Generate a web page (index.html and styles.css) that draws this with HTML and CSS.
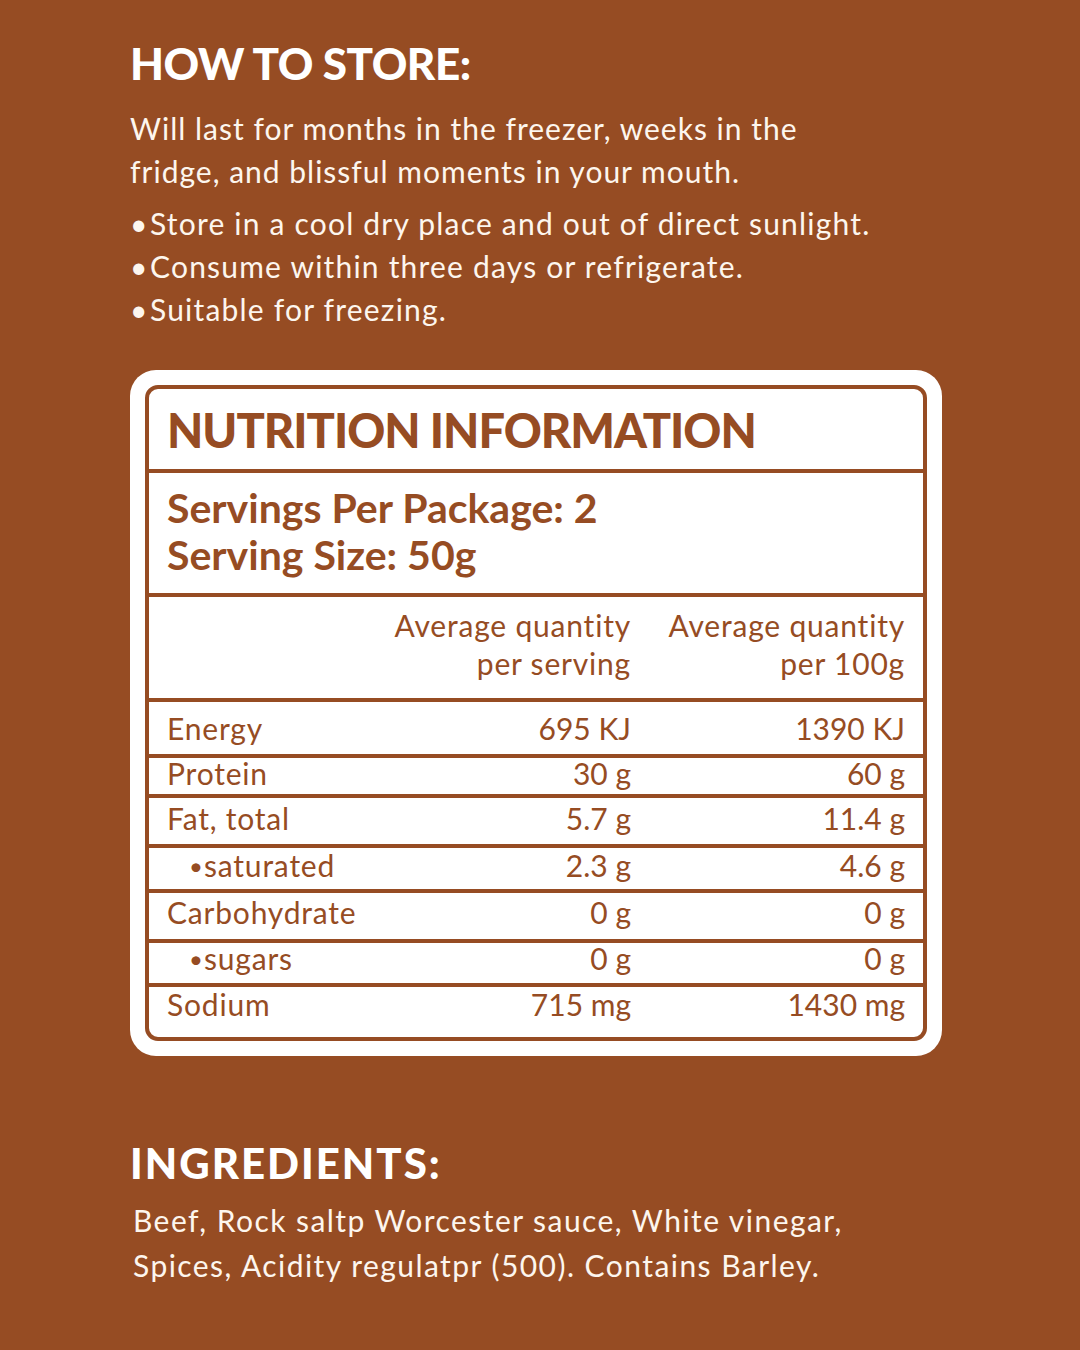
FILE: index.html
```html
<!DOCTYPE html>
<html lang="en">
<head>
<meta charset="utf-8">
<title>Nutrition</title>
<link rel="stylesheet" href="styles.css">
</head>
<body>
<main class="page">
  <section class="store">
    <h1 class="section-title">HOW TO STORE:</h1>
    <p class="lead">Will last for months in the freezer, weeks in the<br>fridge, and blissful moments in your mouth.</p>
    <ul class="bullets">
      <li>Store in a cool dry place and out of direct sunlight.</li>
      <li>Consume within three days or refrigerate.</li>
      <li>Suitable for freezing.</li>
    </ul>
  </section>

  <section class="panel">
    <div class="panel-inner">
      <h2 class="panel-title">NUTRITION INFORMATION</h2>
      <div class="servings">Servings Per Package: 2<br>Serving Size: 50g</div>
      <div class="row head">
        <span></span>
        <span class="num">Average quantity<br>per serving</span>
        <span class="num">Average quantity<br>per 100g</span>
      </div>
      <div class="row r-energy"><span class="label">Energy</span><span class="num">695 KJ</span><span class="num">1390 KJ</span></div>
      <div class="row r-protein"><span class="label">Protein</span><span class="num">30 g</span><span class="num">60 g</span></div>
      <div class="row r-fat"><span class="label">Fat, total</span><span class="num">5.7 g</span><span class="num">11.4 g</span></div>
      <div class="row r-sat"><span class="label sub">saturated</span><span class="num">2.3 g</span><span class="num">4.6 g</span></div>
      <div class="row r-carb"><span class="label">Carbohydrate</span><span class="num">0 g</span><span class="num">0 g</span></div>
      <div class="row r-sug"><span class="label sub">sugars</span><span class="num">0 g</span><span class="num">0 g</span></div>
      <div class="row r-sod"><span class="label">Sodium</span><span class="num">715 mg</span><span class="num">1430 mg</span></div>
    </div>
  </section>

  <section class="ingredients">
    <h2 class="section-title ing-title">INGREDIENTS:</h2>
    <p class="ing-text">Beef, Rock saltp Worcester sauce, White vinegar,<br>Spices, Acidity regulatpr (500). Contains Barley.</p>
  </section>
</main>
</body>
</html>
```

FILE: styles.css
```css
* { box-sizing: border-box; }

html, body {
  margin: 0;
  padding: 0;
}

body {
  background: #964c23;
  font-family: Lato, "Noto Sans", sans-serif;
  color: #fdf6ee;
  width: 1080px;
  height: 1350px;
  overflow: hidden;
}

.page {
  padding: 41px 0 0 130px;
}

.section-title {
  margin: 0;
  font-size: 44px;
  line-height: 44px;
  font-weight: 900;
  color: #ffffff;
  letter-spacing: -0.5px;
}

.lead {
  margin: 22px 0 0;
  font-size: 30px;
  line-height: 43px;
  font-weight: 400;
  letter-spacing: 1px;
}

.bullets {
  list-style: none;
  margin: 9px 0 0;
  padding: 0;
  font-size: 30px;
  line-height: 43px;
  letter-spacing: 1.2px;
}

.bullets li {
  display: flex;
}

.bullets li::before {
  content: "\2022";
  width: 20px;
  flex: none;
  letter-spacing: 0;
}

.panel {
  margin-top: 39px;
  width: 812px;
  background: #ffffff;
  border-radius: 26px;
  padding: 15px;
}

.panel-inner {
  border: 4px solid #964c23;
  border-radius: 13px;
  color: #964c23;
}

.panel-title {
  margin: 0;
  padding: 18px 18px 15px;
  font-size: 47px;
  line-height: 47px;
  font-weight: 900;
  letter-spacing: -1px;
  border-bottom: 4px solid #964c23;
}

.servings {
  padding: 11px 18px 15px;
  font-size: 41px;
  line-height: 47px;
  font-weight: 700;
  border-bottom: 4px solid #964c23;
}

.row {
  display: grid;
  grid-template-columns: 213px 251px 274px;
  padding: 0 17px 0 18px;
  font-size: 30px;
  line-height: 30px;
  border-bottom: 4px solid #964c23;
}

.row:last-child {
  border-bottom: none;
}

.row .label {
  letter-spacing: 0.8px;
}

.row .num {
  text-align: right;
  white-space: nowrap;
}

.row .sub {
  padding-left: 22px;
}

.row .sub::before {
  content: "\2022";
  display: inline-block;
  width: 15px;
  font-size: 24px;
  vertical-align: 2px;
}

.row.head {
  line-height: 38px;
  padding-top: 9px;
  padding-bottom: 16px;
}

.row.head .num {
  letter-spacing: 0.8px;
}

.r-energy { padding-top: 11px; padding-bottom: 11px; }
.r-protein { padding-top: 0; padding-bottom: 6px; }
.r-fat { padding-top: 5px; padding-bottom: 11px; }
.r-sat { padding-top: 2px; padding-bottom: 8px; }
.r-carb { padding-top: 4px; padding-bottom: 12px; }
.r-sug { padding-top: 0; padding-bottom: 9px; }
.r-sod { padding-top: 2px; padding-bottom: 18px; }

.ingredients {
  margin-top: 86px;
}

.ing-title {
  font-size: 42px;
  line-height: 42px;
  letter-spacing: 2px;
}

.ing-text {
  margin: 14px 0 0 3px;
  font-size: 30px;
  line-height: 45px;
  letter-spacing: 1.45px;
}
```
